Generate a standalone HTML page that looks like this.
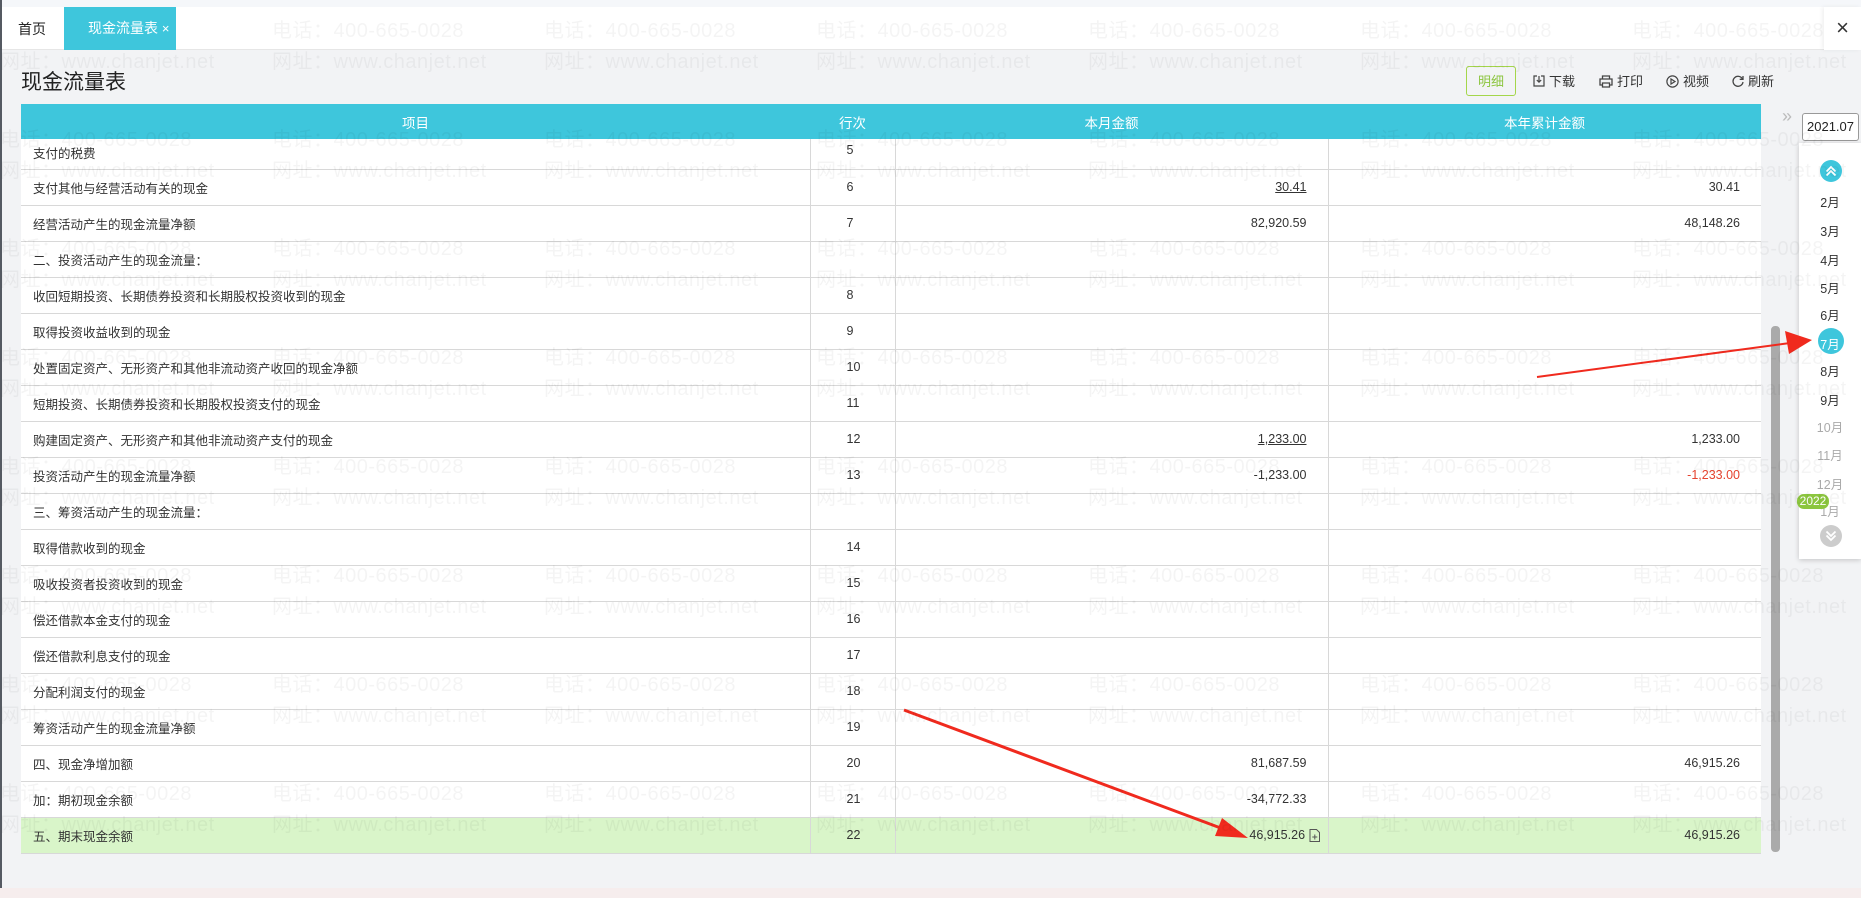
<!DOCTYPE html>
<html><head><meta charset="utf-8">
<style>
*{margin:0;padding:0;box-sizing:border-box}
body{width:1861px;height:898px;overflow:hidden;background:#f2f3f5;font-family:"Liberation Sans","Noto Sans CJK SC",sans-serif;color:#333;position:relative}
.top{position:absolute;left:0;top:0;width:1861px;height:7px;background:#f5f7fa}
.tabbar{position:absolute;left:0;top:7px;width:1861px;height:43px;background:#fff;border-bottom:1px solid #e6e6e6}
.lb{position:absolute;left:0;top:0;width:2px;height:898px;background:#555a62}
.home{position:absolute;left:18px;top:19px;font-size:14px;color:#222}
.tab{position:absolute;left:64px;top:7px;width:112px;height:43px;background:#3ec6dc;color:#fff;font-size:14px;line-height:43px;padding-left:24px}
.close{position:absolute;left:1824px;top:7px;width:37px;height:43px;background:#fff;box-shadow:-2px 0 4px rgba(0,0,0,.06);font-size:22px;line-height:42px;text-align:center;color:#333}
.title{position:absolute;left:21px;top:66px;font-size:21px;color:#222}
.btn{position:absolute;top:66px;font-size:13px;color:#333;line-height:29px;display:flex;align-items:center;gap:4px;height:30px}
.mx{left:1466px;width:50px;height:30px;border:1px solid #a4d64a;border-radius:3px;color:#8cc53f;justify-content:center}
table{position:absolute;left:21px;top:104px;border-collapse:collapse;table-layout:fixed;width:1740px;font-size:12.5px}
th{background:#3ec6dc;color:#fff;font-weight:normal;height:35px;font-size:13.5px}
td{height:36px;border-bottom:1px solid #d8d8d8;background:#fff;padding:0}
td.c2{border-left:1px solid #d8d8d8;padding-left:36px}
td.c3,td.c4{border-left:1px solid #d8d8d8;text-align:right;padding-right:21px}
td.c1{padding-left:12px}
tr.first td{height:30px;vertical-align:top;padding-top:4px}
tr.g td{background:#d9f5c9}
u{text-decoration:underline}
.red{color:#e5432f}
.sb{position:absolute;left:1771px;top:326px;width:9px;height:526px;background:#aaa;border-radius:4px}
.dbl{position:absolute;left:1782px;top:106px;color:#bbb;font-size:18px}
.date{position:absolute;left:1802px;top:113px;width:57px;height:28px;border:1px solid #999;border-radius:3px;background:#fff;font-size:13px;text-align:center;line-height:26px;color:#222}
.panel{position:absolute;left:1799px;top:143px;width:62px;height:416px;background:#fff;box-shadow:0 1px 5px rgba(0,0,0,.2)}
.m{position:absolute;left:1799px;width:62px;text-align:center;font-size:12.5px;color:#333}
.m.gr{color:#aaa}
.circ{position:absolute;width:26px;height:26px;border-radius:13px;left:1818px}
.wm{position:absolute;left:0;width:1900px;white-space:nowrap;font-size:20px;color:rgba(0,0,0,.045);pointer-events:none;font-family:"Liberation Sans","Noto Sans CJK SC",sans-serif;letter-spacing:0.5px}
.wm span{display:inline-block;width:272px}
.bot{position:absolute;left:0;top:888px;width:1861px;height:10px;background:#f6eded}
</style></head><body>
<div class="top"></div>
<div class="tabbar"></div>
<div class="lb"></div>
<div class="home">首页</div>
<div class="tab">现金流量表 <span style="font-size:13px">×</span></div>
<div class="close">×</div>
<div class="title">现金流量表</div>
<div class="btn mx">明细</div>
<div class="btn" style="left:1533px"><svg width="12" height="12" viewBox="0 0 12 12" fill="none" stroke="#444" stroke-width="1.2"><path d="M4 1H1v10h10V1H8M6 1v6M3.8 5L6 7.2 8.2 5"/></svg>下载</div>
<div class="btn" style="left:1599px"><svg width="14" height="13" viewBox="0 0 14 13" fill="none" stroke="#444" stroke-width="1.3"><path d="M3.5 4V1h7v3M3.5 10H1V4h12v6h-2.5M3.5 8h7v4h-7z"/></svg>打印</div>
<div class="btn" style="left:1666px"><svg width="13" height="13" viewBox="0 0 13 13" fill="none" stroke="#444" stroke-width="1.2"><circle cx="6.5" cy="6.5" r="5.6"/><path d="M5 4v5l4-2.5z"/></svg>视频</div>
<div class="btn" style="left:1732px"><svg width="12" height="12" viewBox="0 0 12 12" fill="none" stroke="#444" stroke-width="1.3"><path d="M10.5 4A5 5 0 1 0 11 7"/><path d="M11 1v3.3H7.7"/></svg>刷新</div>
<table>
<colgroup><col style="width:789px"><col style="width:85px"><col style="width:433px"><col style="width:433px"></colgroup>
<tr><th>项目</th><th>行次</th><th>本月金额</th><th>本年累计金额</th></tr>
<tr class="first"><td class="c1">支付的税费</td><td class="c2">5</td><td class="c3"></td><td class="c4"></td></tr>
<tr><td class="c1">支付其他与经营活动有关的现金</td><td class="c2">6</td><td class="c3"><u>30.41</u></td><td class="c4">30.41</td></tr>
<tr><td class="c1">经营活动产生的现金流量净额</td><td class="c2">7</td><td class="c3">82,920.59</td><td class="c4">48,148.26</td></tr>
<tr><td class="c1">二、投资活动产生的现金流量：</td><td class="c2"></td><td class="c3"></td><td class="c4"></td></tr>
<tr><td class="c1">收回短期投资、长期债券投资和长期股权投资收到的现金</td><td class="c2">8</td><td class="c3"></td><td class="c4"></td></tr>
<tr><td class="c1">取得投资收益收到的现金</td><td class="c2">9</td><td class="c3"></td><td class="c4"></td></tr>
<tr><td class="c1">处置固定资产、无形资产和其他非流动资产收回的现金净额</td><td class="c2">10</td><td class="c3"></td><td class="c4"></td></tr>
<tr><td class="c1">短期投资、长期债券投资和长期股权投资支付的现金</td><td class="c2">11</td><td class="c3"></td><td class="c4"></td></tr>
<tr><td class="c1">购建固定资产、无形资产和其他非流动资产支付的现金</td><td class="c2">12</td><td class="c3"><u>1,233.00</u></td><td class="c4">1,233.00</td></tr>
<tr><td class="c1">投资活动产生的现金流量净额</td><td class="c2">13</td><td class="c3">-1,233.00</td><td class="c4 red">-1,233.00</td></tr>
<tr><td class="c1">三、筹资活动产生的现金流量：</td><td class="c2"></td><td class="c3"></td><td class="c4"></td></tr>
<tr><td class="c1">取得借款收到的现金</td><td class="c2">14</td><td class="c3"></td><td class="c4"></td></tr>
<tr><td class="c1">吸收投资者投资收到的现金</td><td class="c2">15</td><td class="c3"></td><td class="c4"></td></tr>
<tr><td class="c1">偿还借款本金支付的现金</td><td class="c2">16</td><td class="c3"></td><td class="c4"></td></tr>
<tr><td class="c1">偿还借款利息支付的现金</td><td class="c2">17</td><td class="c3"></td><td class="c4"></td></tr>
<tr><td class="c1">分配利润支付的现金</td><td class="c2">18</td><td class="c3"></td><td class="c4"></td></tr>
<tr><td class="c1">筹资活动产生的现金流量净额</td><td class="c2">19</td><td class="c3"></td><td class="c4"></td></tr>
<tr><td class="c1">四、现金净增加额</td><td class="c2">20</td><td class="c3">81,687.59</td><td class="c4">46,915.26</td></tr>
<tr><td class="c1">加：期初现金余额</td><td class="c2">21</td><td class="c3">-34,772.33</td><td class="c4"></td></tr>
<tr class="g"><td class="c1">五、期末现金余额</td><td class="c2">22</td><td class="c3" style="padding-right:8px">46,915.26 <svg width="11" height="13" viewBox="0 0 11 13" fill="none" stroke="#555" stroke-width="1" style="vertical-align:middle"><path d="M1 .5h6.5l3 3v9H1z"/><path d="M5.8 5.5v5M3.3 8h5"/></svg></td><td class="c4">46,915.26</td></tr>
</table>
<div class="sb"></div>
<div class="dbl">»</div>
<div class="date">2021.07</div>
<div class="panel"></div>
<svg style="position:absolute;left:1820px;top:160px" width="22" height="22" viewBox="0 0 22 22"><circle cx="11" cy="11" r="11" fill="#3ec6dc"/><path d="M6.5 11.5L11 7l4.5 4.5M6.5 15.5L11 11l4.5 4.5" fill="none" stroke="#fff" stroke-width="1.8"/></svg>
<div class="m" style="top:192px">2月</div>
<div class="m" style="top:221px">3月</div>
<div class="m" style="top:250px">4月</div>
<div class="m" style="top:278px">5月</div>
<div class="m" style="top:305px">6月</div>
<div class="circ" style="top:328px;background:#3ec6dc"></div>
<div class="m" style="top:334px;color:#fff">7月</div>
<div class="m" style="top:361px">8月</div>
<div class="m" style="top:390px">9月</div>
<div class="m gr" style="top:417px">10月</div>
<div class="m gr" style="top:445px">11月</div>
<div class="m gr" style="top:474px">12月</div>
<div class="m gr" style="top:501px">1月</div>
<div style="position:absolute;left:1797px;top:494px;width:32px;height:15px;background:#8cc63f;border-radius:7px;color:#fff;font-size:12px;line-height:15px;text-align:center">2022</div>
<svg style="position:absolute;left:1820px;top:525px" width="22" height="22" viewBox="0 0 22 22"><circle cx="11" cy="11" r="11" fill="#ccc"/><path d="M6.5 6.5L11 11l4.5-4.5M6.5 10.5L11 15l4.5-4.5" fill="none" stroke="#fff" stroke-width="1.8"/></svg>
<svg style="position:absolute;left:0;top:0" width="1861" height="898">
<line x1="1537" y1="377" x2="1790" y2="343" stroke="#f02a1e" stroke-width="2"/>
<polygon points="1812,340 1785,331 1789,354" fill="#f02a1e"/>
<line x1="904" y1="710" x2="1226" y2="830" stroke="#f02a1e" stroke-width="3"/>
<polygon points="1248,838 1222,818 1215,836" fill="#f02a1e"/>
</svg>
<div class="wm" style="top:14px"><span></span><span>电话：400-665-0028</span><span>电话：400-665-0028</span><span>电话：400-665-0028</span><span>电话：400-665-0028</span><span>电话：400-665-0028</span><span>电话：400-665-0028</span></div>
<div class="wm" style="top:45px"><span>网址：www.chanjet.net</span><span>网址：www.chanjet.net</span><span>网址：www.chanjet.net</span><span>网址：www.chanjet.net</span><span>网址：www.chanjet.net</span><span>网址：www.chanjet.net</span><span>网址：www.chanjet.net</span></div>
<div class="wm" style="top:123px"><span>电话：400-665-0028</span><span>电话：400-665-0028</span><span>电话：400-665-0028</span><span>电话：400-665-0028</span><span>电话：400-665-0028</span><span>电话：400-665-0028</span><span>电话：400-665-0028</span></div>
<div class="wm" style="top:154px"><span>网址：www.chanjet.net</span><span>网址：www.chanjet.net</span><span>网址：www.chanjet.net</span><span>网址：www.chanjet.net</span><span>网址：www.chanjet.net</span><span>网址：www.chanjet.net</span><span>网址：www.chanjet.net</span></div>
<div class="wm" style="top:232px"><span>电话：400-665-0028</span><span>电话：400-665-0028</span><span>电话：400-665-0028</span><span>电话：400-665-0028</span><span>电话：400-665-0028</span><span>电话：400-665-0028</span><span>电话：400-665-0028</span></div>
<div class="wm" style="top:263px"><span>网址：www.chanjet.net</span><span>网址：www.chanjet.net</span><span>网址：www.chanjet.net</span><span>网址：www.chanjet.net</span><span>网址：www.chanjet.net</span><span>网址：www.chanjet.net</span><span>网址：www.chanjet.net</span></div>
<div class="wm" style="top:341px"><span>电话：400-665-0028</span><span>电话：400-665-0028</span><span>电话：400-665-0028</span><span>电话：400-665-0028</span><span>电话：400-665-0028</span><span>电话：400-665-0028</span><span>电话：400-665-0028</span></div>
<div class="wm" style="top:372px"><span>网址：www.chanjet.net</span><span>网址：www.chanjet.net</span><span>网址：www.chanjet.net</span><span>网址：www.chanjet.net</span><span>网址：www.chanjet.net</span><span>网址：www.chanjet.net</span><span>网址：www.chanjet.net</span></div>
<div class="wm" style="top:450px"><span>电话：400-665-0028</span><span>电话：400-665-0028</span><span>电话：400-665-0028</span><span>电话：400-665-0028</span><span>电话：400-665-0028</span><span>电话：400-665-0028</span><span>电话：400-665-0028</span></div>
<div class="wm" style="top:481px"><span>网址：www.chanjet.net</span><span>网址：www.chanjet.net</span><span>网址：www.chanjet.net</span><span>网址：www.chanjet.net</span><span>网址：www.chanjet.net</span><span>网址：www.chanjet.net</span><span>网址：www.chanjet.net</span></div>
<div class="wm" style="top:559px"><span>电话：400-665-0028</span><span>电话：400-665-0028</span><span>电话：400-665-0028</span><span>电话：400-665-0028</span><span>电话：400-665-0028</span><span>电话：400-665-0028</span><span>电话：400-665-0028</span></div>
<div class="wm" style="top:590px"><span>网址：www.chanjet.net</span><span>网址：www.chanjet.net</span><span>网址：www.chanjet.net</span><span>网址：www.chanjet.net</span><span>网址：www.chanjet.net</span><span>网址：www.chanjet.net</span><span>网址：www.chanjet.net</span></div>
<div class="wm" style="top:668px"><span>电话：400-665-0028</span><span>电话：400-665-0028</span><span>电话：400-665-0028</span><span>电话：400-665-0028</span><span>电话：400-665-0028</span><span>电话：400-665-0028</span><span>电话：400-665-0028</span></div>
<div class="wm" style="top:699px"><span>网址：www.chanjet.net</span><span>网址：www.chanjet.net</span><span>网址：www.chanjet.net</span><span>网址：www.chanjet.net</span><span>网址：www.chanjet.net</span><span>网址：www.chanjet.net</span><span>网址：www.chanjet.net</span></div>
<div class="wm" style="top:777px"><span>电话：400-665-0028</span><span>电话：400-665-0028</span><span>电话：400-665-0028</span><span>电话：400-665-0028</span><span>电话：400-665-0028</span><span>电话：400-665-0028</span><span>电话：400-665-0028</span></div>
<div class="wm" style="top:808px"><span>网址：www.chanjet.net</span><span>网址：www.chanjet.net</span><span>网址：www.chanjet.net</span><span>网址：www.chanjet.net</span><span>网址：www.chanjet.net</span><span>网址：www.chanjet.net</span><span>网址：www.chanjet.net</span></div>
<div class="bot"></div>
</body></html>
